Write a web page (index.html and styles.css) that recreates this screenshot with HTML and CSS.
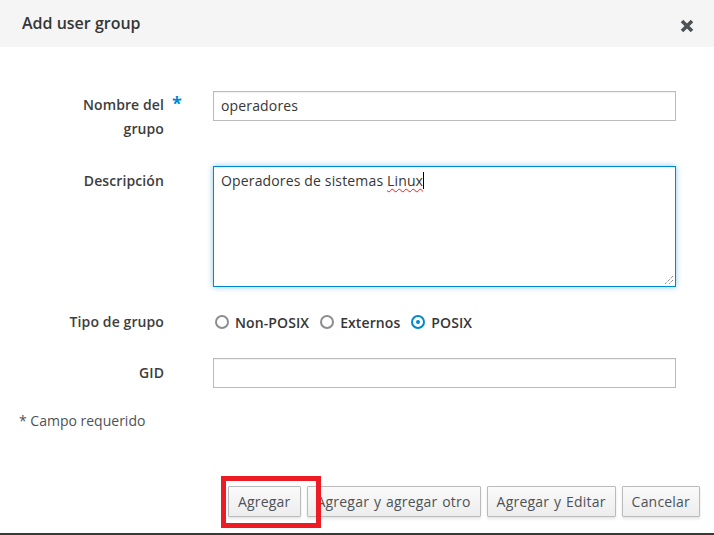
FILE: index.html
```html
<!DOCTYPE html>
<html>
<head>
<meta charset="utf-8">
<link rel="stylesheet" href="styles.css">
</head>
<body>
<div class="modal">
  <div class="modal-header">
    <h4 class="modal-title">Add user group</h4>
    <span class="close" aria-label="Close">
      <svg width="14" height="14" viewBox="0 0 14 14"><path d="M2 2 L12 12 M12 2 L2 12" stroke="#4d5258" stroke-width="3.6" stroke-linecap="butt"/></svg>
    </span>
  </div>
  <div class="modal-body">
    <div class="row row-name">
      <label class="lbl">Nombre del grupo</label>
      <span class="req">*</span>
      <div class="ctl"><div class="input">operadores</div></div>
    </div>
    <div class="row row-desc">
      <label class="lbl">Descripción</label>
      <span class="req"></span>
      <div class="ctl">
        <div class="textarea">Operadores de sistemas <span class="typo">Linux</span><span class="caret"></span>
          <svg class="grip" width="12" height="12" viewBox="0 0 12 12"><path d="M11 3 L3 11 M11 7 L7 11" stroke="#555" stroke-width="1" stroke-dasharray="1 1"/></svg>
        </div>
      </div>
    </div>
    <div class="row row-type">
      <label class="lbl">Tipo de grupo</label>
      <span class="req"></span>
      <div class="ctl radios">
        <span class="radio"><span class="dot"></span>Non-POSIX</span>
        <span class="radio"><span class="dot"></span>Externos</span>
        <span class="radio"><span class="dot on"></span>POSIX</span>
      </div>
    </div>
    <div class="row row-gid">
      <label class="lbl">GID</label>
      <span class="req"></span>
      <div class="ctl"><div class="input"></div></div>
    </div>
    <div class="required-note">* Campo requerido</div>
  </div>
  <div class="modal-footer">
    <button class="btn">Agregar</button>
    <button class="btn">Agregar y agregar otro</button>
    <button class="btn">Agregar y Editar</button>
    <button class="btn">Cancelar</button>
    <span class="highlight"></span>
  </div>
</div>
</body>
</html>
```
FILE: styles.css
```css
html, body {
  margin: 0;
  padding: 0;
  background: #fff;
}
body {
  font-family: "Open Sans", "Liberation Sans", sans-serif;
  font-size: 14px;
  color: #363636;
  width: 714px;
  height: 535px;
  overflow: hidden;
}
.modal {
  height: 533px;
  border-bottom: 2px solid #393939;
  position: relative;
}
.modal-header {
  height: 47px;
  background: #f5f5f5;
  display: flex;
  align-items: center;
  justify-content: space-between;
  padding: 0 20px 0 22px;
}
.modal-title {
  margin: 0;
  font-size: 16px;
  font-weight: 600;
  color: #363636;
  position: relative;
  top: -1px;
}
.close {
  display: flex;
  margin-top: 4px;
}
.modal-body {
  padding-top: 44px;
}
.row {
  display: flex;
  align-items: flex-start;
}
.lbl {
  width: 164px;
  text-align: right;
  font-weight: 600;
  line-height: 24px;
  color: #3d3d3d;
  letter-spacing: 0.1px;
}
.req {
  width: 41px;
  padding-left: 8px;
  color: #0088ce;
  font-weight: 700;
  font-size: 18px;
  line-height: 24px;
}
.ctl {
  width: 463px;
}
.row-name .lbl {
  width: 94px;
  margin-left: 70px;
  padding-top: 2px;
}
.row-name { margin-bottom: 25px; }
.row-desc .lbl { padding-top: 3px; }
.row-desc { margin-bottom: 23px; }
.row-type { margin-bottom: 24px; }
.row-gid .lbl { padding-top: 3px; }
.input {
  box-sizing: border-box;
  height: 30px;
  border: 1px solid #bbb;
  box-shadow: inset 0 1px 1px rgba(3,3,3,0.06);
  padding: 0 7px;
  line-height: 28px;
  color: #363636;
  letter-spacing: 0.15px;
}
.textarea {
  box-sizing: border-box;
  height: 121px;
  border: 1px solid #0088ce;
  box-shadow: 0 0 6px rgba(0,136,206,0.45), inset 0 1px 1px rgba(3,3,3,0.06);
  padding: 2px 7px;
  line-height: 24px;
  position: relative;
  letter-spacing: 0.15px;
}
.typo {
  text-decoration: underline wavy #e8201d;
  text-decoration-thickness: 1px;
  text-underline-offset: 2px;
}
.caret {
  display: inline-block;
  width: 1px;
  height: 17px;
  background: #000;
  vertical-align: -3px;
}
.grip {
  position: absolute;
  right: 1px;
  bottom: 1px;
}
.radios {
  display: flex;
  align-items: center;
  height: 24px;
  font-weight: 600;
  padding-left: 2px;
}
.radio {
  display: inline-flex;
  align-items: center;
  margin-right: 11px;
  letter-spacing: 0.1px;
}
.dot {
  box-sizing: border-box;
  width: 14px;
  height: 14px;
  border-radius: 50%;
  border: 2px solid #8b8d8f;
  margin-right: 6px;
  position: relative;
}
.dot.on {
  border-color: #0088ce;
}
.dot.on::after {
  content: "";
  position: absolute;
  left: 3px;
  top: 3px;
  width: 4px;
  height: 4px;
  border-radius: 50%;
  background: #0088ce;
}
.required-note {
  margin-top: 21px;
  padding-left: 19px;
  line-height: 24px;
  color: #4d5258;
}
.modal-footer {
  position: relative;
  display: flex;
  justify-content: flex-end;
  gap: 6px;
  padding: 53px 14px 0 0;
}
.btn {
  font-family: "Open Sans", "Liberation Sans", sans-serif;
  font-size: 14px;
  height: 31px;
  padding: 0 9px;
  border: 1px solid #bbb;
  border-radius: 1px;
  background: linear-gradient(#fafafa, #ededed);
  box-shadow: 0 2px 3px rgba(3,3,3,0.1);
  color: #4d5258;
  margin: 0;
  letter-spacing: 0.2px;
  word-spacing: 1px;
}
.highlight {
  position: absolute;
  left: 221px;
  top: 43px;
  width: 100px;
  height: 52px;
  box-sizing: border-box;
  border: 5px solid #ed1c24;
  pointer-events: none;
}
```
